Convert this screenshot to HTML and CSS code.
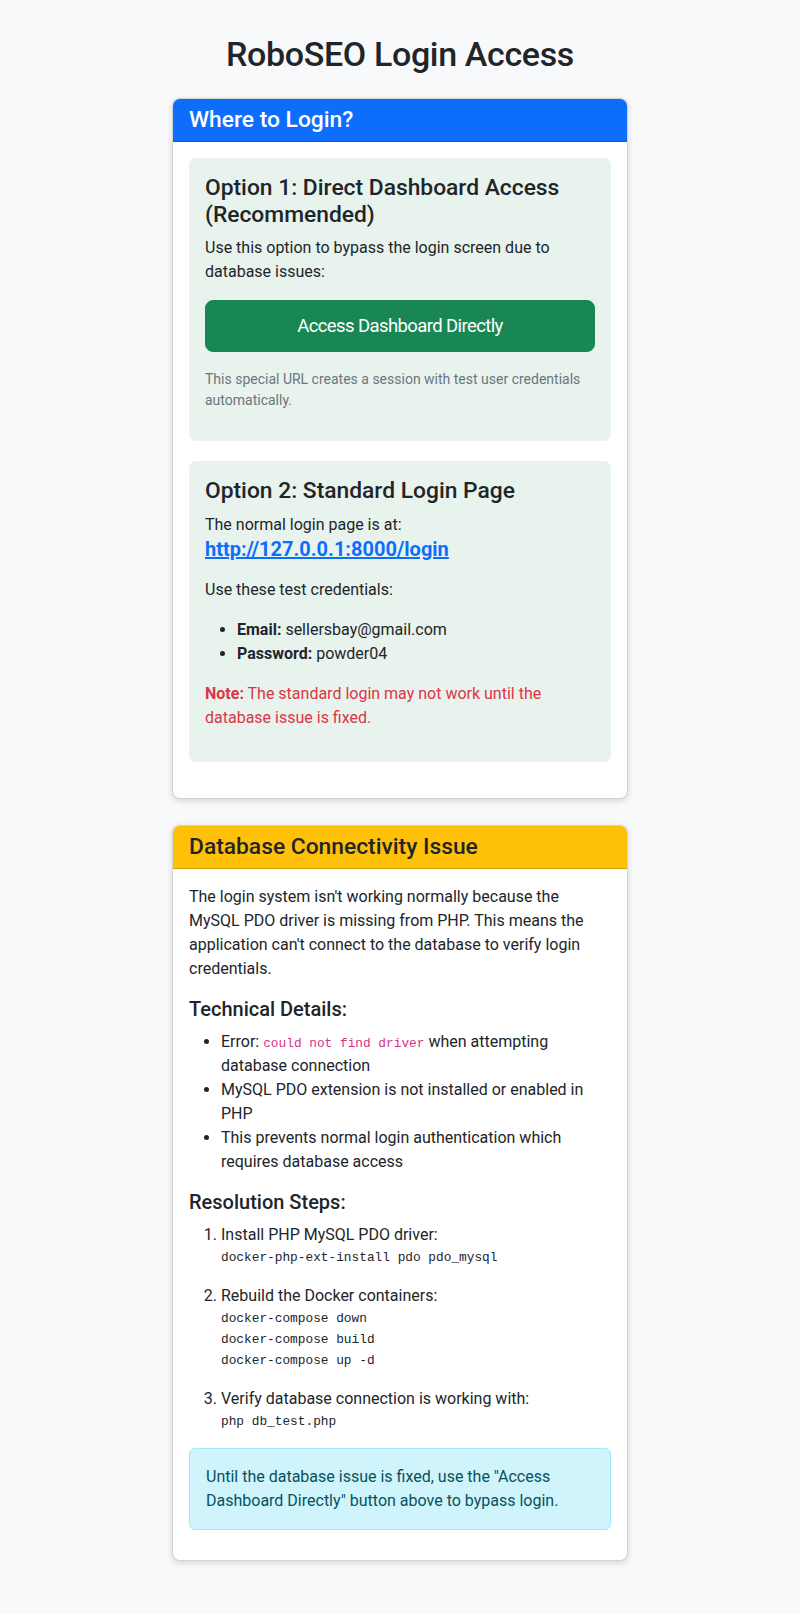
FILE: index.html
```html
<!DOCTYPE html>
<html lang="en">
<head>
<meta charset="utf-8">
<title>RoboSEO Login Access</title>
<link rel="stylesheet" href="styles.css">
</head>
<body>
<main class="page">
  <h1 class="title">RoboSEO Login Access</h1>

  <section class="card card-first">
    <div class="card-header header-primary">
      <h4 class="header-title">Where to Login?</h4>
    </div>
    <div class="card-body">
      <div class="option">
        <h4 class="option-title">Option 1: Direct Dashboard Access (Recommended)</h4>
        <p>Use this option to bypass the login screen due to database issues:</p>
        <a class="btn-success" href="#">Access Dashboard Directly</a>
        <p class="small-muted">This special URL creates a session with test user credentials automatically.</p>
      </div>
      <div class="option">
        <h4 class="option-title">Option 2: Standard Login Page</h4>
        <p class="flush">The normal login page is at:</p>
        <h5 class="login-link"><a href="#">http://127.0.0.1:8000/login</a></h5>
        <p>Use these test credentials:</p>
        <ul class="list">
          <li><strong>Email:</strong> sellersbay@gmail.com</li>
          <li><strong>Password:</strong> powder04</li>
        </ul>
        <p class="danger"><strong>Note:</strong> <span>The standard login may not work until the</span><br><span>database issue is fixed.</span></p>
      </div>
    </div>
  </section>

  <section class="card">
    <div class="card-header header-warning">
      <h4 class="header-title">Database Connectivity Issue</h4>
    </div>
    <div class="card-body">
      <p>The login system isn't working normally because the MySQL PDO driver is missing from PHP. This means the application can't connect to the database to verify login credentials.</p>
      <h5 class="sub-title">Technical Details:</h5>
      <ul class="list">
        <li><span>Error:</span> <code class="code-inline">could not find driver</code> <span>when attempting</span><br><span>database connection</span></li>
        <li>MySQL PDO extension is not installed or enabled in PHP</li>
        <li>This prevents normal login authentication which requires database access</li>
      </ul>
      <h5 class="sub-title">Resolution Steps:</h5>
      <ol class="list">
        <li>Install PHP MySQL PDO driver:
<pre class="code-block">docker-php-ext-install pdo pdo_mysql</pre></li>
        <li>Rebuild the Docker containers:
<pre class="code-block">docker-compose down
docker-compose build
docker-compose up -d</pre></li>
        <li>Verify database connection is working with:
<pre class="code-block">php db_test.php</pre></li>
      </ol>
      <div class="alert-info">Until the database issue is fixed, use the "Access Dashboard Directly" button above to bypass login.</div>
    </div>
  </section>
</main>
</body>
</html>
```
FILE: styles.css
```css
* { box-sizing: border-box; }

body {
  margin: 0;
  background: #f8f9fa;
  color: #212529;
  font-family: Roboto, "Liberation Sans", sans-serif;
  font-size: 16px;
  line-height: 1.5;
}

.page {
  width: 456px;
  margin: 0 auto;
  padding-top: 34px;
  padding-bottom: 40px;
}

.title {
  margin: 0 0 23px;
  text-align: center;
  font-size: 34px;
  font-weight: 500;
  line-height: 1.2;
  letter-spacing: -0.35px;
}

.card {
  background: #fff;
  border: 1px solid rgba(0, 0, 0, 0.175);
  border-radius: 8px;
  box-shadow: 0 2px 6px rgba(0, 0, 0, 0.14);
  overflow: hidden;
}

.card-first { margin-bottom: 26px; }

.card-header {
  padding: 8px 16px;
  border-bottom: 1px solid rgba(0, 0, 0, 0.175);
}

.header-primary { background: #0d6efd; color: #fff; }
.header-warning { background: #ffc107; color: #212529; }

.header-title,
.option-title {
  margin: 0;
  font-size: 22.8px;
  font-weight: 500;
  line-height: 1.2;
}

.header-title { line-height: 26px; }

.card-body { padding: 16px; }

p { margin: 0 0 16px; }
p.flush { margin-bottom: 0; }

.option {
  background: rgba(25, 135, 84, 0.1);
  border-radius: 7px;
  padding: 16px;
  margin-bottom: 20px;
}

.option + .option { margin-top: 1px; }

.option-title { margin-bottom: 8px; }

.btn-success {
  display: block;
  width: 100%;
  margin-bottom: 17px;
  padding: 10px 16px;
  border: 1px solid #198754;
  border-radius: 8px;
  background: #198754;
  color: #fff;
  font-size: 18.5px;
  letter-spacing: -0.6px;
  line-height: 30px;
  text-align: center;
  text-decoration: none;
}

.small-muted {
  margin-bottom: 14px;
  font-size: 14px;
  line-height: 21px;
  color: #6c757d;
}

.login-link {
  margin: 0 0 17px;
  font-size: 20px;
  font-weight: 700;
  line-height: 1.2;
}

.login-link a { color: #0d6efd; text-decoration: underline; }

.list {
  margin: 0 0 16px;
  padding-left: 32px;
}

.danger { color: #dc3545; }

.sub-title {
  margin: 0 0 9px;
  font-size: 20px;
  font-weight: 500;
  line-height: 1.2;
}

.code-inline {
  font-family: "Liberation Mono", monospace;
  font-size: 12.8px;
  line-height: 1;
  color: #d63384;
}

.code-block {
  margin: 0 0 16px;
  font-family: "Liberation Mono", monospace;
  font-size: 12.8px;
  line-height: 21px;
  color: #212529;
}

.alert-info {
  margin-bottom: 14px;
  padding: 16px;
  border: 1px solid #9eeaf9;
  border-radius: 6px;
  background: #cff4fc;
  color: #055160;
}
```
